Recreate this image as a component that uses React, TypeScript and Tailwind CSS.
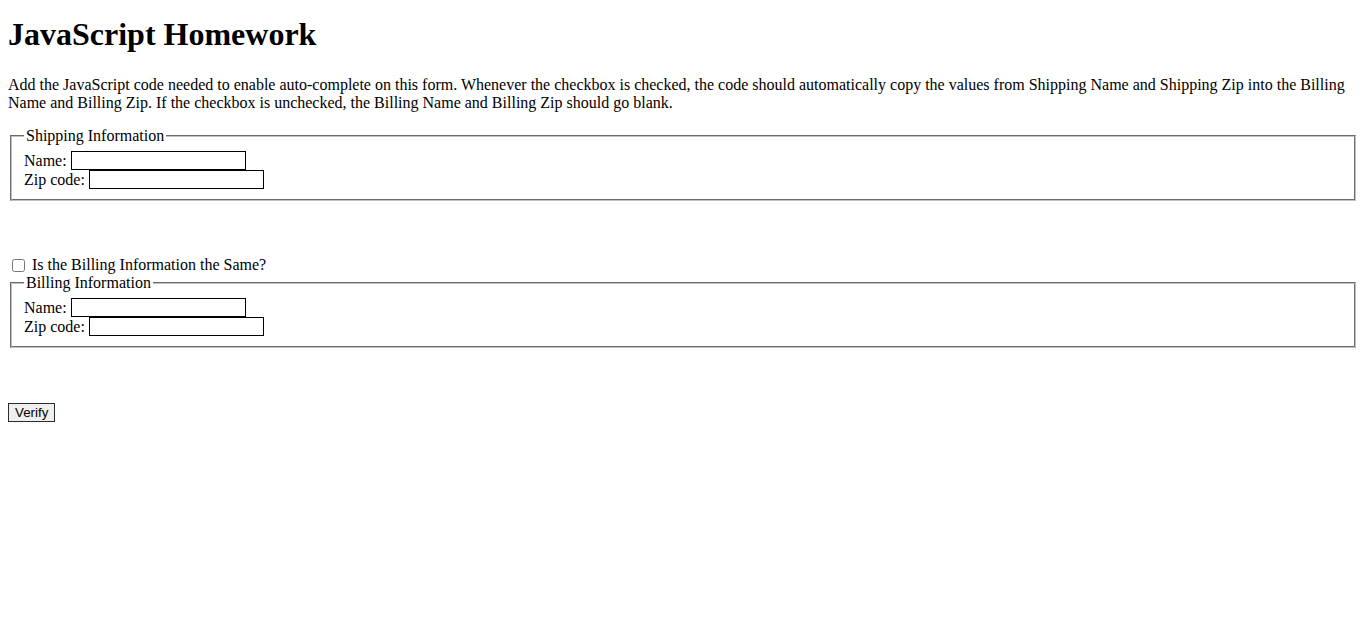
import React from 'react';

const fieldsetCls =
  "mx-[2px] border-2 [border-style:groove] border-[rgb(192,192,192)] pt-[6px] px-3 pb-[10px] min-w-0";

const Field: React.FC<{ label: string }> = ({ label }) => (
  <div className="flex items-center h-[19px]">
    <span>{label}</span>
    <input type="text" className="ml-1 w-[175px] h-[19px] border border-black bg-white px-[2px] text-[13.33px] font-['Liberation_Sans',sans-serif] outline-none" />
  </div>
);

const App: React.FC = () => {
  return (
    <div className="px-2 font-['Liberation_Serif',serif] text-base leading-[normal] text-black bg-white min-h-screen">
      <h1 className="mt-4 mb-[23px] text-[32px] font-bold leading-[normal]">JavaScript Homework</h1>
      <p className="mb-[15px]">
        Add the JavaScript code needed to enable auto-complete on this form. Whenever the checkbox is checked, the code should automatically copy the values from Shipping Name and Shipping Zip into the Billing Name and Billing Zip. If the checkbox is unchecked, the Billing Name and Billing Zip should go blank.
      </p>

      <fieldset className={fieldsetCls}>
        <legend className="px-[2px]">Shipping Information</legend>
        <Field label="Name:" />
        <Field label="Zip code:" />
      </fieldset>

      <div className="mt-[55px] flex items-center h-[18px]">
        <input type="checkbox" className="m-0 ml-1 mr-[3px] w-[13px] h-[13px] mt-[1px]" />
        <span className="ml-1">Is the Billing Information the Same?</span>
      </div>

      <fieldset className={fieldsetCls}>
        <legend className="px-[2px]">Billing Information</legend>
        <Field label="Name:" />
        <Field label="Zip code:" />
      </fieldset>

      <button className="mt-[55px] px-[6px] py-[1px] border border-[#2b2b2b] bg-[#efefef] text-[13.33px] font-['Liberation_Sans',sans-serif] leading-[normal]">
        Verify
      </button>
    </div>
  );
};

export default App;
